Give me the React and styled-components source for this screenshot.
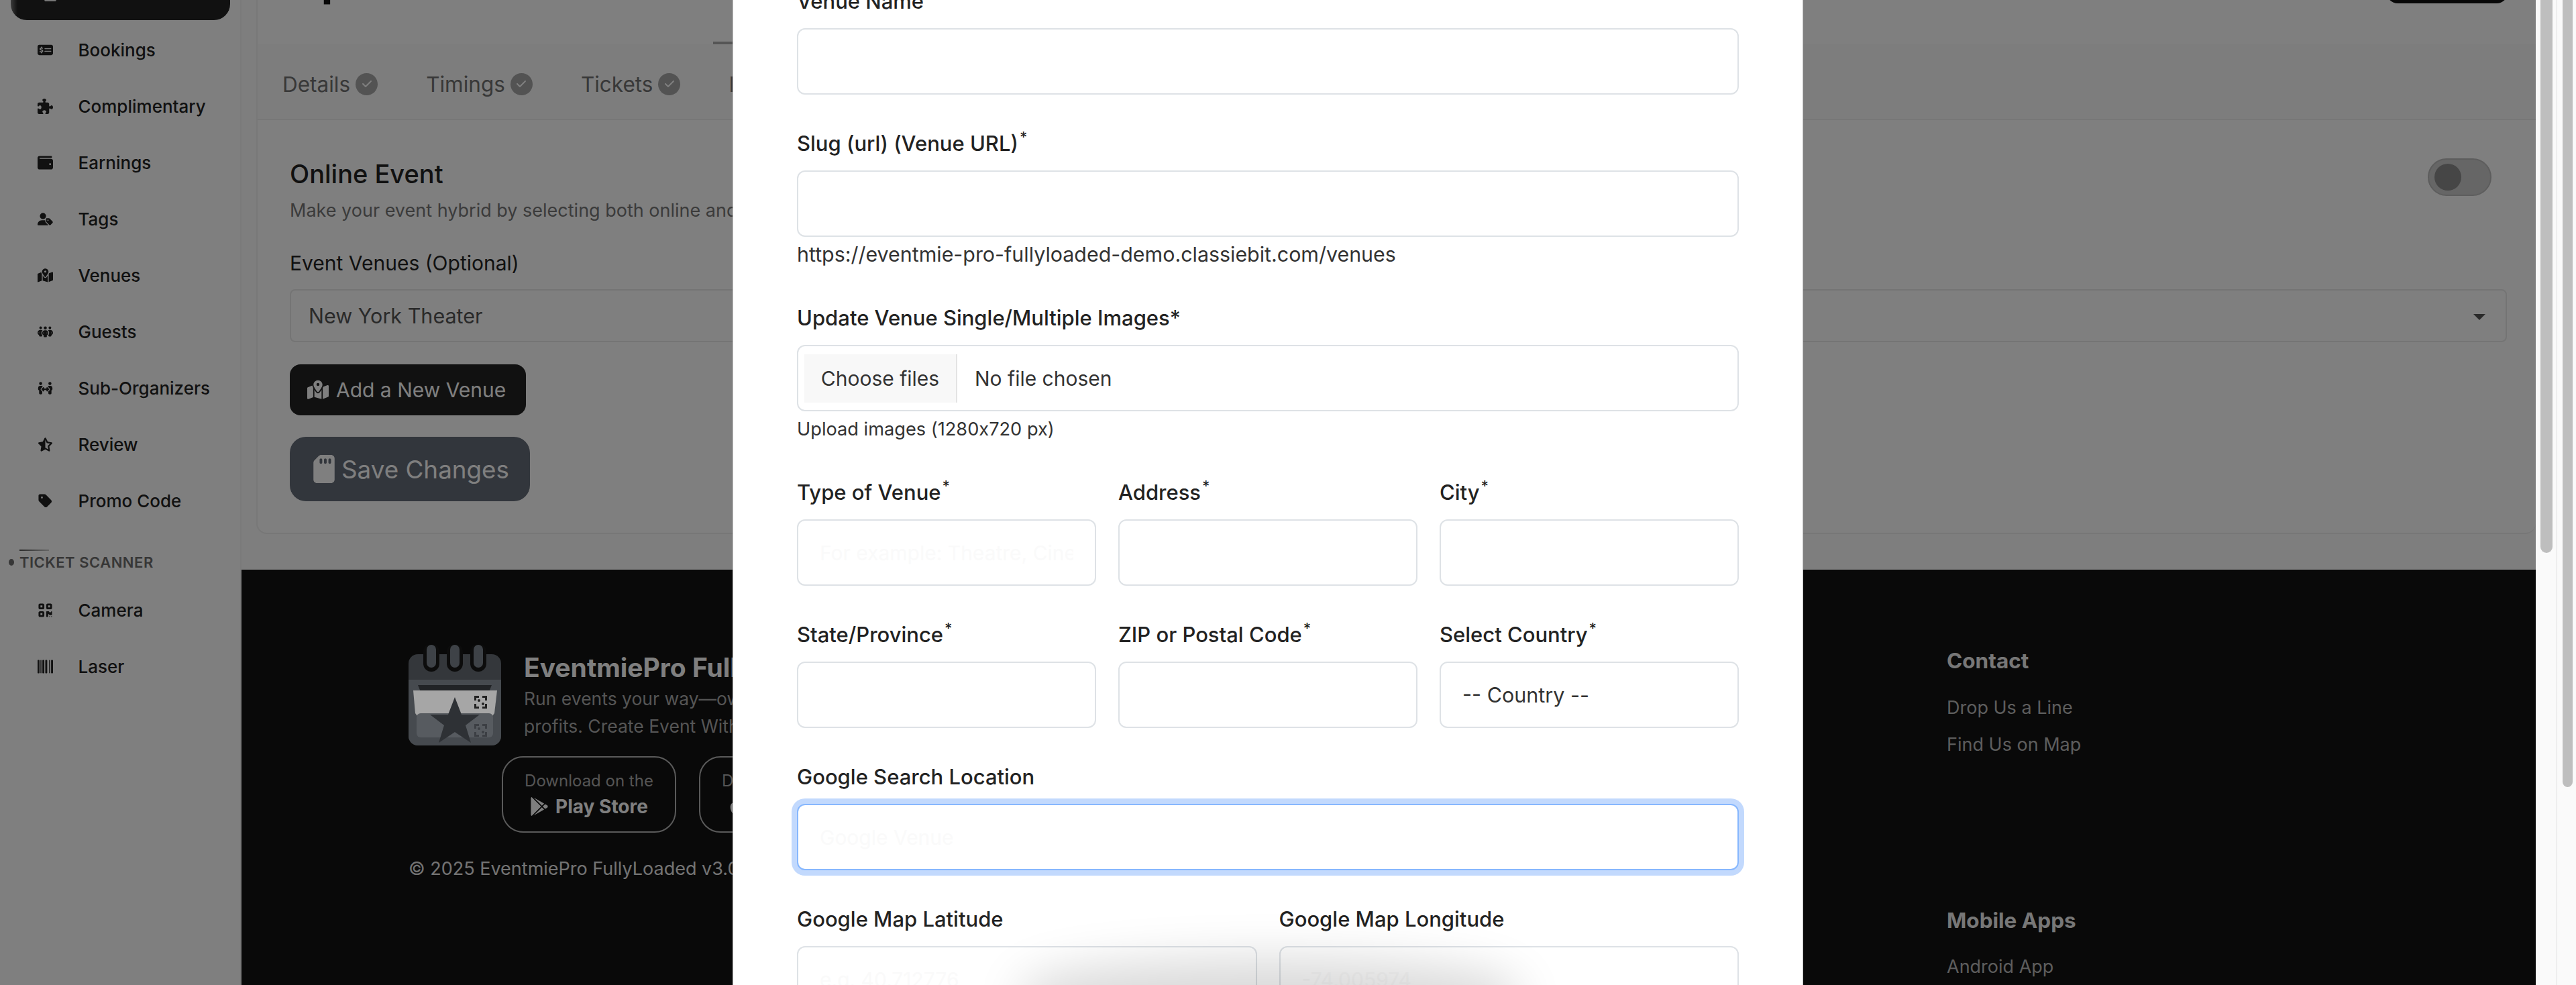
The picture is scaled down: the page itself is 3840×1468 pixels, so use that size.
import React from 'react';
import styled, { createGlobalStyle } from 'styled-components';
import {
  FaApple,
  FaBarcode,
  FaCalendarCheck,
  FaCheck,
  FaGooglePlay,
  FaMapLocationDot,
  FaMoneyCheckDollar,
  FaPeopleArrows,
  FaPeopleGroup,
  FaPuzzlePiece,
  FaQrcode,
  FaSdCard,
  FaStarHalfStroke,
  FaTag,
  FaUserTag,
  FaWallet,
} from 'react-icons/fa6';

const GlobalStyle = createGlobalStyle`
  html, body {
    margin: 0;
    padding: 0;
    background: #fff;
    overflow: hidden;
  }
  * {
    box-sizing: border-box;
  }
  body {
    font-family: Inter, "Liberation Sans", sans-serif;
    color: #222;
  }
`;

const Shell = styled.div`
  display: flex;
  width: 3840px;
  height: 1468px;
  overflow: hidden;
`;

const Frame = styled.div`
  position: relative;
  display: grid;
  grid-template-columns: 360px 1fr;
  width: 3780px;
  height: 100%;
  overflow: hidden;
`;

// Sidebar
const Sidebar = styled.aside`
  border-right: 2px solid #f4f4f4;
  background: #fff;
`;

const ActiveItem = styled.div`
  display: flex;
  align-items: flex-end;
  height: 80px;
  margin: -50px 15px 2px 16px;
  padding: 0 0 28px 49px;
  border-radius: 24px;
  background: linear-gradient(90deg, #777 0, #222 10px);
  color: #eee;
  font-size: 20px;
`;

const NavItem = styled.div`
  display: flex;
  align-items: center;
  height: 84px;
  padding-left: 56px;
  color: #222;
  font-size: 26px;
  font-weight: 500;
`;

const NavIcon = styled.span`
  display: flex;
  align-items: center;
  width: 60.5px;
  font-size: 23px;

  svg {
    width: auto;
    height: 1em;
  }
`;

const SectionRule = styled.div`
  width: 44px;
  height: 2px;
  margin: 31px 0 0 29px;
  background: linear-gradient(90deg, #555, #ccc);
`;

const SectionTitle = styled.div`
  display: flex;
  align-items: center;
  height: 34px;
  margin-bottom: 12px;
  color: #6f6f6f;
  font-size: 22px;
  font-weight: 600;
  letter-spacing: 0.5px;
  text-transform: uppercase;

  &::before {
    content: '';
    width: 8px;
    height: 10px;
    margin: 0 8px 0 13px;
    border-radius: 50%;
    background: #6f6f6f;
  }
`;

// Main column
const Main = styled.main`
  display: flex;
  flex-direction: column;
  min-width: 0;
  background: #fcfcfc;
`;

const CardArea = styled.div`
  flex: none;
  height: 849px;
  padding-left: 22px;
`;

const Card = styled.section`
  display: flow-root;
  height: 796px;
  border-left: 2px solid #f0f0f0;
  border-bottom: 2px solid #eee;
  border-bottom-left-radius: 16px;
  border-bottom-right-radius: 16px;
  background: #fff;
`;

const TopRow = styled.div`
  display: flex;
  align-items: flex-end;
  justify-content: space-between;
  height: 100px;
  margin-top: -92px;
  padding: 0 42px 0 48px;
  overflow: hidden;
`;

const PageTitle = styled.h1`
  margin: 0 0 6px;
  color: #111;
  font-size: 64px;
  font-weight: 700;
  line-height: 1;
  white-space: nowrap;
`;

const TopButton = styled.div`
  width: 180px;
  height: 60px;
  margin-bottom: 3px;
  border-radius: 16px;
  background: #111;
`;

const StepRule = styled.div`
  width: 200px;
  height: 4px;
  margin: 54px 0 0 679px;
  background: #aaa;
`;

const TabRow = styled.nav`
  display: flex;
  gap: 72px;
  height: 113px;
  padding: 37px 0 0 37px;
  border-bottom: 2px solid #eee;
  background: #fafafa;
`;

const Tab = styled.div`
  display: flex;
  align-items: center;
  gap: 8px;
  height: 44px;
  color: #707070;
  font-size: 31.5px;
  white-space: nowrap;
`;

const DoneBadge = styled.span`
  display: flex;
  align-items: center;
  justify-content: center;
  width: 33px;
  height: 33px;
  border-radius: 50%;
  background: #a6a6a6;
  color: #fff;
  font-size: 16px;
`;

const CardBody = styled.div`
  padding: 56px 43px 0 48px;
`;

const HeaderRow = styled.div`
  display: flex;
  align-items: flex-start;
  justify-content: space-between;
`;

const CardTitle = styled.h2`
  margin: 0;
  color: #222;
  font-size: 38px;
  font-weight: 500;
  line-height: 48px;
`;

const CardText = styled.p`
  margin: 11px 0 0;
  color: #777;
  font-size: 27px;
  line-height: 40px;
  white-space: nowrap;
`;

const Toggle = styled.div`
  display: flex;
  align-items: center;
  width: 95px;
  height: 56px;
  margin: 1px 23px 0 0;
  padding-left: 8px;
  border: 2px solid #bbb;
  border-radius: 28px;
  background: #ccc;

  &::before {
    content: '';
    width: 40px;
    height: 40px;
    border-radius: 50%;
    background: #8c8c8c;
  }
`;

const VenueLabel = styled.div`
  margin-top: 36px;
  color: #222;
  font-size: 30px;
  line-height: 44px;
`;

const VenueSelect = styled.div`
  position: relative;
  display: flex;
  align-items: center;
  height: 79px;
  margin-top: 17px;
  padding-left: 26px;
  border: 2px solid #e8e8e8;
  border-radius: 8px;
  color: #555;
  font-size: 30.5px;

  &::after {
    content: '';
    position: absolute;
    right: 30px;
    top: 35px;
    border-top: 9px solid #555;
    border-left: 9px solid transparent;
    border-right: 9px solid transparent;
  }
`;

const ActionButton = styled.div`
  display: flex;
  align-items: center;
  width: ${(p) => p.$width}px;
  height: ${(p) => p.$height}px;
  margin-top: ${(p) => p.$top}px;
  padding-left: ${(p) => p.$pad}px;
  gap: ${(p) => p.$gap}px;
  border-radius: ${(p) => p.$radius}px;
  background: ${(p) => p.$bg};
  color: #fff;
  font-size: ${(p) => p.$size}px;
  white-space: nowrap;

  svg {
    flex: none;
    width: auto;
    height: ${(p) => p.$icon}px;
  }
`;

// Footer
const Footer = styled.footer`
  display: flex;
  flex: 1;
  padding: 112px 0 0 249px;
  background: #121212;
  overflow: hidden;
`;

const FooterLeft = styled.div`
  flex: none;
  width: 2293px;
`;

const BrandRow = styled.div`
  display: flex;
  gap: 34px;
`;

const BrandLogo = styled.svg`
  position: relative;
  z-index: 2;
  flex: none;
  width: 138px;
  height: 150px;
`;

const BrandText = styled.div`
  padding-top: 8px;
`;

const BrandName = styled.div`
  color: #fff;
  font-size: 39px;
  font-weight: 700;
  line-height: 52px;
  white-space: nowrap;
`;

const BrandLine = styled.div`
  color: #aaa;
  font-size: 26.5px;
  line-height: 41px;
  white-space: nowrap;
`;

const StoreRow = styled.div`
  display: flex;
  gap: 34px;
  margin: 16px 0 0 139px;
`;

const StoreButton = styled.div`
  display: flex;
  flex-direction: column;
  align-items: center;
  justify-content: center;
  width: 260px;
  height: 114px;
  border: 2px solid #b4b4b4;
  border-radius: 32px;
`;

const StoreHint = styled.span`
  color: #aaa;
  font-size: 24px;
  line-height: 36px;
`;

const StoreName = styled.span`
  display: flex;
  align-items: center;
  gap: 10px;
  color: #fff;
  font-size: 28px;
  font-weight: 700;
  line-height: 40px;
`;

const Copyright = styled.div`
  margin-top: 34px;
  color: #e6e6e6;
  font-size: 27px;
  line-height: 40px;
  white-space: nowrap;
`;

const FooterColumn = styled.div`
  display: flex;
  flex-direction: column;
`;

const FooterHeading = styled.div`
  margin-top: ${(p) => p.$top || 0}px;
  color: #eee;
  font-size: 31.5px;
  font-weight: 700;
  line-height: 48px;
`;

const FooterLink = styled.div`
  margin-top: ${(p) => p.$top}px;
  color: #bbb;
  font-size: 27px;
  line-height: 40px;
`;

// Modal
const Backdrop = styled.div`
  position: absolute;
  inset: 0;
  z-index: 1;
  display: flex;
  justify-content: center;
  background: rgba(0, 0, 0, 0.5);
`;

const Modal = styled.div`
  position: relative;
  width: 1596px;
  height: 100%;
  padding: 0 95px;
  border-left: 1px solid rgba(0, 0, 0, 0.25);
  border-right: 1px solid rgba(0, 0, 0, 0.25);
  background: #fff;
  overflow: hidden;
`;

const ModalGlow = styled.div`
  position: absolute;
  left: 480px;
  bottom: -40px;
  width: 640px;
  height: 30px;
  border-radius: 50%;
  box-shadow: 0 0 70px 50px rgba(0, 0, 0, 0.15);
`;

const Form = styled.form`
  display: flex;
  flex-direction: column;
  gap: 51px;
  margin-top: -20px;
`;

const Field = styled.div`
  min-width: 0;
`;

const Label = styled.label`
  display: block;
  height: 44px;
  margin-bottom: 18px;
  color: #222;
  font-size: 31px;
  font-weight: 500;
  line-height: 44px;
  white-space: nowrap;

  sup {
    position: relative;
    top: -2px;
    margin-left: 2px;
    font-size: 22px;
    line-height: 0;
  }
`;

const Input = styled.input`
  display: block;
  width: 100%;
  height: 99px;
  padding: 0 32px;
  border: 2px solid ${(p) => (p.$focused ? '#86b7fe' : '#dee2e6')};
  border-radius: 12px;
  outline: none;
  box-shadow: ${(p) => (p.$focused ? '0 0 0 8px #c2d9fd' : 'none')};
  font-family: inherit;
  font-size: 30px;

  &::placeholder {
    color: #fafafa;
    opacity: 1;
  }
`;

const CountrySelect = styled.select`
  display: block;
  width: 100%;
  height: 99px;
  padding: 0 32px;
  border: 2px solid #dee2e6;
  border-radius: 12px;
  appearance: none;
  background: #fff;
  color: #333;
  font-family: inherit;
  font-size: 30.5px;
`;

const Hint = styled.div`
  margin: ${(p) => p.$top}px 0 ${(p) => p.$bottom}px;
  color: #333;
  font-size: ${(p) => p.$size}px;
  font-feature-settings: 'calt' 0;
  line-height: ${(p) => p.$line}px;
`;

const FileBox = styled.div`
  display: flex;
  align-items: center;
  height: 99px;
  padding-left: 9px;
  border: 2px solid #dee2e6;
  border-radius: 12px;
  color: #333;
  font-size: 30px;
`;

const FileButton = styled.span`
  display: flex;
  align-items: center;
  justify-content: center;
  width: 228px;
  height: 72px;
  margin-right: 26px;
  border-right: 2px solid #e4e4e4;
  background: #f8f8f8;
`;

const Columns = styled.div`
  display: grid;
  grid-template-columns: repeat(${(p) => p.$count}, 1fr);
  column-gap: 33px;
`;

// Page scrollbars
const Scrollbars = styled.div`
  display: flex;
  width: 60px;
  height: 100%;
  background: #fafafa;
`;

const ScrollTrack = styled.div`
  width: 30px;
  padding-left: ${(p) => p.$pad}px;
  border-left: ${(p) => (p.$line ? '2px solid #eee' : 'none')};
`;

const ScrollThumb = styled.div`
  width: ${(p) => p.$width}px;
  height: ${(p) => p.$height}px;
  border-radius: 0 0 10px 10px;
  background: #bebebe;
`;

const navItems = [
  { label: 'Bookings', icon: <FaMoneyCheckDollar /> },
  { label: 'Complimentary', icon: <FaPuzzlePiece /> },
  { label: 'Earnings', icon: <FaWallet /> },
  { label: 'Tags', icon: <FaUserTag /> },
  { label: 'Venues', icon: <FaMapLocationDot /> },
  { label: 'Guests', icon: <FaPeopleGroup /> },
  { label: 'Sub-Organizers', icon: <FaPeopleArrows /> },
  { label: 'Review', icon: <FaStarHalfStroke /> },
  { label: 'Promo Code', icon: <FaTag /> },
];

const scannerItems = [
  { label: 'Camera', icon: <FaQrcode /> },
  { label: 'Laser', icon: <FaBarcode /> },
];

const LogoCode = ({ y, color }) => (
  <g fill={color}>
    <path d={`M98 ${y}h7v3h-4v4h-3zM110 ${y}h7v7h-3v-4h-4zM98 ${y + 12}h3v4h4v3h-7zM114 ${y + 12}h3v7h-7v-3h4z`} />
    <rect x="103" y={y + 5} width="4" height="4" rx="2" />
    <rect x="109" y={y + 10} width="4" height="4" rx="2" />
  </g>
);

const Logo = () => (
  <BrandLogo viewBox="0 0 138 150">
    <rect x="0" y="14" width="138" height="136" rx="14" fill="#34373b" />
    <path d="M0 52h138v84a14 14 0 0 1-14 14H14a14 14 0 0 1-14-14z" fill="#464a4f" />
    {[34, 69, 104].map((x) => (
      <g key={x}>
        <rect x={x - 12} y="-2" width="24" height="42" rx="12" fill="#0c0c0c" />
        <rect x={x - 7} y="0" width="14" height="34" rx="7" fill="#3e4247" />
      </g>
    ))}
    <path d="M14 60h110l-4 10H18z" fill="#212326" />
    <path d="M7 68h125l-4 34-6 8H16l-6-8z" fill="#a6a6a6" />
    <rect x="12" y="102" width="114" height="36" rx="6" fill="#575b60" />
    <path d="M69 78l10 26h27l-21 16 8 26-24-16-24 16 8-26-21-16h27z" fill="#2e3135" />
    <LogoCode y={76} color="#222" />
    <LogoCode y={118} color="#3c3f44" />
  </BrandLogo>
);

const Required = () => <sup>*</sup>;

const App = () => {
  return (
    <Shell>
      <GlobalStyle />
      <Frame>
        <Sidebar>
          <ActiveItem>
            <FaCalendarCheck />
          </ActiveItem>
          {navItems.map((item) => (
            <NavItem key={item.label}>
              <NavIcon>{item.icon}</NavIcon>
              {item.label}
            </NavItem>
          ))}
          <SectionRule />
          <SectionTitle>Ticket Scanner</SectionTitle>
          {scannerItems.map((item) => (
            <NavItem key={item.label}>
              <NavIcon>{item.icon}</NavIcon>
              {item.label}
            </NavItem>
          ))}
        </Sidebar>

        <Main>
          <CardArea>
            <Card>
              <TopRow>
                <PageTitle>Update Event</PageTitle>
                <TopButton />
              </TopRow>
              <StepRule />
              <TabRow>
                {['Details', 'Timings', 'Tickets'].map((tab) => (
                  <Tab key={tab}>
                    {tab}
                    <DoneBadge>
                      <FaCheck />
                    </DoneBadge>
                  </Tab>
                ))}
                <Tab>Location</Tab>
              </TabRow>
              <CardBody>
                <HeaderRow>
                  <div>
                    <CardTitle>Online Event</CardTitle>
                    <CardText>Make your event hybrid by selecting both online and offline</CardText>
                  </div>
                  <Toggle />
                </HeaderRow>
                <VenueLabel>Event Venues (Optional)</VenueLabel>
                <VenueSelect>New York Theater</VenueSelect>
                <ActionButton $width={352} $height={76} $top={33} $pad={26} $gap={11} $icon={32} $radius={16} $bg="#222" $size={30}>
                  <FaMapLocationDot />
                  Add a New Venue
                </ActionButton>
                <ActionButton $width={358} $height={96} $top={32} $pad={30} $gap={5} $icon={42} $radius={24} $bg="#656c78" $size={36.8}>
                  <FaSdCard />
                  Save Changes
                </ActionButton>
              </CardBody>
            </Card>
          </CardArea>

          <Footer>
            <FooterLeft>
              <BrandRow>
                <Logo />
                <BrandText>
                  <BrandName>EventmiePro FullyLoaded</BrandName>
                  <BrandLine>Run events your way—own your platform, keep your</BrandLine>
                  <BrandLine>profits. Create Event With Ease</BrandLine>
                </BrandText>
              </BrandRow>
              <StoreRow>
                <StoreButton>
                  <StoreHint>Download on the</StoreHint>
                  <StoreName>
                    <FaGooglePlay />
                    Play Store
                  </StoreName>
                </StoreButton>
                <StoreButton>
                  <StoreHint>Download on the</StoreHint>
                  <StoreName>
                    <FaApple />
                    App Store
                  </StoreName>
                </StoreButton>
              </StoreRow>
              <Copyright>© 2025 EventmiePro FullyLoaded v3.0</Copyright>
            </FooterLeft>
            <FooterColumn>
              <FooterHeading>Contact</FooterHeading>
              <FooterLink $top={26}>Drop Us a Line</FooterLink>
              <FooterLink $top={15}>Find Us on Map</FooterLink>
              <FooterHeading $top={218}>Mobile Apps</FooterHeading>
              <FooterLink $top={25}>Android App</FooterLink>
            </FooterColumn>
          </Footer>
        </Main>

        <Backdrop>
          <Modal>
            <Form>
              <Field>
                <Label>Venue Name</Label>
                <Input />
              </Field>
              <Field>
                <Label>
                  Slug (url) (Venue URL)
                  <Required />
                </Label>
                <Input />
                <Hint $top={6} $bottom={2} $size={30.4} $line={40}>
                  https://eventmie-pro-fullyloaded-demo.classiebit.com/venues
                </Hint>
              </Field>
              <Field>
                <Label>Update Venue Single/Multiple Images*</Label>
                <FileBox>
                  <FileButton>Choose files</FileButton>
                  No file chosen
                </FileBox>
                <Hint $top={9} $bottom={3} $size={27.2} $line={36}>
                  Upload images (1280x720 px)
                </Hint>
              </Field>
              <Columns $count={3}>
                <Field>
                  <Label>
                    Type of Venue
                    <Required />
                  </Label>
                  <Input placeholder="For example: Theatre, Cinema" />
                </Field>
                <Field>
                  <Label>
                    Address
                    <Required />
                  </Label>
                  <Input />
                </Field>
                <Field>
                  <Label>
                    City
                    <Required />
                  </Label>
                  <Input />
                </Field>
              </Columns>
              <Columns $count={3}>
                <Field>
                  <Label>
                    State/Province
                    <Required />
                  </Label>
                  <Input />
                </Field>
                <Field>
                  <Label>
                    ZIP or Postal Code
                    <Required />
                  </Label>
                  <Input />
                </Field>
                <Field>
                  <Label>
                    Select Country
                    <Required />
                  </Label>
                  <CountrySelect>
                    <option>-- Country --</option>
                  </CountrySelect>
                </Field>
              </Columns>
              <Field>
                <Label>Google Search Location</Label>
                <Input $focused placeholder="Google Venue" />
              </Field>
              <Columns $count={2}>
                <Field>
                  <Label>Google Map Latitude</Label>
                  <Input placeholder="e.g. 40.712776" />
                </Field>
                <Field>
                  <Label>Google Map Longitude</Label>
                  <Input placeholder="-74.005974" />
                </Field>
              </Columns>
            </Form>
            <ModalGlow />
          </Modal>
        </Backdrop>
      </Frame>

      <Scrollbars>
        <ScrollTrack $pad={7}>
          <ScrollThumb $width={18} $height={824} />
        </ScrollTrack>
        <ScrollTrack $pad={8} $line>
          <ScrollThumb $width={15} $height={1173} />
        </ScrollTrack>
      </Scrollbars>
    </Shell>
  );
};

export default App;
